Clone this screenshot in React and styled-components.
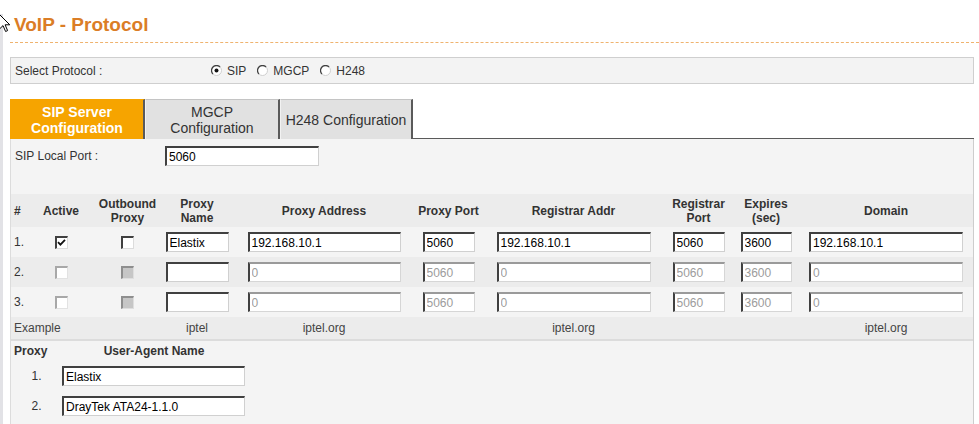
import React from "react";
import styled, { createGlobalStyle, css } from "styled-components";

const GlobalStyle = createGlobalStyle`
  html, body {
    margin: 0;
    padding: 0;
    background: #fff;
  }
  body {
    font-family: "Liberation Sans", Arial, sans-serif;
    font-size: 12px;
    color: #333;
    overflow: hidden;
  }
`;

const COLS = "19px 62px 71px 68px 186px 63px 187px 63px 72px 168px 1fr";

const Page = styled.div`
  position: relative;
  min-height: 424px;
  box-sizing: border-box;
  border-left: 3px solid #e2e2e6;
  padding-left: 7px;
`;

const Cursor = styled.svg`
  position: absolute;
  left: -4px;
  top: 0;
`;

const Title = styled.h1`
  margin: 14px 0 0;
  padding: 0 0 6px 4px;
  font: bold 19px/22px "Liberation Sans", Arial, sans-serif;
  color: #db7d26;
  border-bottom: 1px dashed #efb36e;
`;

const SelectBar = styled.div`
  margin: 14px 5px 0 0;
  height: 27px;
  box-sizing: border-box;
  display: flex;
  align-items: center;
  padding-left: 4px;
  background: #f3f3f3;
  border: 1px solid #cfcfcf;
`;

const SelectLabel = styled.span`
  width: 196px;
`;

const RadioItem = styled.label`
  display: flex;
  align-items: center;
  gap: 5px;
  margin-right: 11px;
  color: #333;
`;

const TabRow = styled.div`
  margin: 15px 5px 0 0;
  display: flex;
  height: 40px;
`;

const Tab = styled.div`
  width: ${(p) => p.$w}px;
  height: 40px;
  box-sizing: border-box;
  display: flex;
  align-items: center;
  justify-content: center;
  text-align: center;
  font-size: 14px;
  line-height: 16px;
  color: #333;
  background: #e1e1e1;
  border-top: 1px solid #c4c4c4;
  border-left: 1px solid #f2f2f2;
  border-right: 2px solid #5a5a5a;
  ${(p) =>
    p.$active &&
    css`
      background: #f6a400;
      color: #fff;
      font-weight: bold;
      border-top-color: #f6a400;
      border-left-color: #f6a400;
    `}
`;

const TabFiller = styled.div`
  flex: 1;
  border-bottom: 1px solid #5a5a5a;
  box-sizing: border-box;
`;

const Panel = styled.div`
  margin-right: 5px;
  min-height: 285px;
  background: #f4f4f4;
  border-left: 1px solid #dcdcdc;
  border-right: 1px solid #cdcdcd;
`;

const LocalPortRow = styled.div`
  display: flex;
  align-items: center;
  height: 20px;
  padding: 7px 0 0 4px;
`;

const LocalPortLabel = styled.span`
  width: 150px;
`;

const Row = styled.div`
  display: grid;
  grid-template-columns: ${COLS};
  align-items: center;
  height: ${(p) => p.$h || 30}px;
  background: ${(p) => (p.$stripe ? "#ececec" : "#f4f4f4")};
  ${(p) =>
    p.$head &&
    css`
      margin-top: 28px;
      font-weight: bold;
      line-height: 14px;
    `}
  ${(p) =>
    p.$example &&
    css`
      border-bottom: 2px solid #dcdcdc;
      color: #444;
    `}
`;

const Cell = styled.div`
  display: flex;
  justify-content: center;
  text-align: center;
  white-space: nowrap;
  ${(p) =>
    p.$left &&
    css`
      justify-content: flex-start;
      padding-left: 3px;
    `}
`;

const TextInput = styled.input`
  box-sizing: border-box;
  width: ${(p) => p.$w}px;
  height: 20px;
  margin: 0;
  padding: 0 2px;
  font: 12px "Liberation Sans", Arial, sans-serif;
  color: #000;
  background: #fff;
  outline: none;
  border-style: solid;
  border-width: 2px 1px 1px 2px;
  border-color: #404040 #d0d0d0 #d0d0d0 #404040;
  ${(p) =>
    p.$dim &&
    css`
      color: #9c9c9c;
      border-color: #9a9a9a #d6d6d6 #d6d6d6 #404040;
    `}
`;

const CheckBox = styled.span`
  display: inline-flex;
  align-items: center;
  justify-content: center;
  width: 13px;
  height: 13px;
  box-sizing: border-box;
  background: #fff;
  border-style: solid;
  border-width: 2px 1px 1px 2px;
  border-color: #404040 #dcdcdc #dcdcdc #404040;
  ${(p) =>
    p.$muted &&
    css`
      border-color: #a8a8a8 #e2e2e2 #e2e2e2 #a8a8a8;
    `}
  ${(p) =>
    p.$filled &&
    css`
      background: #c6c6c6;
      border-color: #8e8e8e #dedede #dedede #8e8e8e;
    `}
`;

const UaHead = styled.div`
  display: grid;
  grid-template-columns: 51px 184px;
  align-items: center;
  height: 20px;
  font-weight: bold;
`;

const UaRow = styled.div`
  display: grid;
  grid-template-columns: 51px 184px;
  align-items: center;
  height: 30px;
`;

const Radio = ({ checked }) => (
  <svg width="11" height="11" viewBox="0 0 11 11">
    <circle cx="5.5" cy="5.5" r="5" fill="#fff" />
    <path d="M9.04 1.96 A5 5 0 0 0 1.96 9.04" stroke="#404040" strokeWidth="1.3" fill="none" />
    <path d="M1.96 9.04 A5 5 0 0 0 9.04 1.96" stroke="#cfcfcf" strokeWidth="1" fill="none" />
    {checked && <circle cx="5.5" cy="5.5" r="2" fill="#111" />}
  </svg>
);

const Check = ({ checked, muted, filled }) => (
  <CheckBox $muted={muted} $filled={filled}>
    {checked && (
      <svg width="9" height="9" viewBox="0 0 9 9">
        <path d="M1 4.2 L3.4 6.6 L8 1.8" stroke="#111" strokeWidth="1.8" fill="none" />
      </svg>
    )}
  </CheckBox>
);

const rows = [
  { n: "1.", on: true, name: "Elastix", addr: "192.168.10.1", port: "5060", reg: "192.168.10.1", regPort: "5060", exp: "3600", dom: "192.168.10.1" },
  { n: "2.", on: false, name: "", addr: "0", port: "5060", reg: "0", regPort: "5060", exp: "3600", dom: "0" },
  { n: "3.", on: false, name: "", addr: "0", port: "5060", reg: "0", regPort: "5060", exp: "3600", dom: "0" },
];

const App = () => {
  return (
    <Page>
      <GlobalStyle />
      <Cursor width="12" height="20" viewBox="0 0 12 20">
        <path d="M0.5 0.5 L0.5 15 L4 11.6 L6.6 17.5 L8.6 16.6 L6.1 10.8 L10.8 10.8 Z" fill="#fff" stroke="#000" strokeWidth="1" />
      </Cursor>

      <Title>VoIP - Protocol</Title>

      <SelectBar>
        <SelectLabel>Select Protocol :</SelectLabel>
        <RadioItem>
          <Radio checked /> SIP
        </RadioItem>
        <RadioItem>
          <Radio /> MGCP
        </RadioItem>
        <RadioItem>
          <Radio /> H248
        </RadioItem>
      </SelectBar>

      <TabRow>
        <Tab $w={135} $active>
          SIP Server
          <br />
          Configuration
        </Tab>
        <Tab $w={135}>
          MGCP
          <br />
          Configuration
        </Tab>
        <Tab $w={133}>H248 Configuration</Tab>
        <TabFiller />
      </TabRow>

      <Panel>
        <LocalPortRow>
          <LocalPortLabel>SIP Local Port :</LocalPortLabel>
          <TextInput $w={154} defaultValue="5060" />
        </LocalPortRow>

        <Row $head $stripe $h={33}>
          <Cell $left>#</Cell>
          <Cell>Active</Cell>
          <Cell>
            Outbound
            <br />
            Proxy
          </Cell>
          <Cell>
            Proxy
            <br />
            Name
          </Cell>
          <Cell>Proxy Address</Cell>
          <Cell>Proxy Port</Cell>
          <Cell>Registrar Addr</Cell>
          <Cell>
            Registrar
            <br />
            Port
          </Cell>
          <Cell>
            Expires
            <br />
            (sec)
          </Cell>
          <Cell>Domain</Cell>
        </Row>

        {rows.map((r, i) => {
          const dim = !r.on;
          return (
            <Row key={r.n} $stripe={i % 2 === 1}>
              <Cell $left>{r.n}</Cell>
              <Cell>
                <Check checked={r.on} muted={dim} />
              </Cell>
              <Cell>
                <Check filled={dim} />
              </Cell>
              <Cell>
                <TextInput $w={63} defaultValue={r.name} />
              </Cell>
              <Cell>
                <TextInput $w={153} $dim={dim} defaultValue={r.addr} />
              </Cell>
              <Cell>
                <TextInput $w={52} $dim={dim} defaultValue={r.port} />
              </Cell>
              <Cell>
                <TextInput $w={154} $dim={dim} defaultValue={r.reg} />
              </Cell>
              <Cell>
                <TextInput $w={52} $dim={dim} defaultValue={r.regPort} />
              </Cell>
              <Cell>
                <TextInput $w={51} $dim={dim} defaultValue={r.exp} />
              </Cell>
              <Cell>
                <TextInput $w={154} $dim={dim} defaultValue={r.dom} />
              </Cell>
            </Row>
          );
        })}

        <Row $example $stripe $h={22}>
          <Cell $left>Example</Cell>
          <Cell />
          <Cell />
          <Cell>iptel</Cell>
          <Cell>iptel.org</Cell>
          <Cell />
          <Cell>iptel.org</Cell>
          <Cell />
          <Cell />
          <Cell>iptel.org</Cell>
        </Row>

        <UaHead>
          <Cell $left>Proxy</Cell>
          <Cell>User-Agent Name</Cell>
        </UaHead>
        <UaRow>
          <Cell>1.</Cell>
          <TextInput $w={183} defaultValue="Elastix" />
        </UaRow>
        <UaRow>
          <Cell>2.</Cell>
          <TextInput $w={183} defaultValue="DrayTek ATA24-1.1.0" />
        </UaRow>
      </Panel>
    </Page>
  );
};

export default App;
